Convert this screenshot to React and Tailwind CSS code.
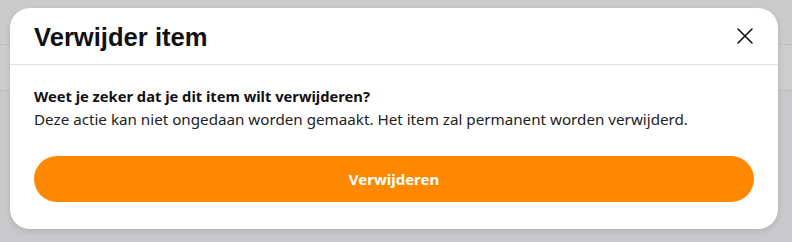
import React from "react";

export default function App() {
  return (
    <div className="relative w-[792px] h-[242px] bg-[#c9c9cb] overflow-hidden">
      <div className="absolute inset-x-0 top-0 h-[45px] bg-[#cbcbcb] border-b border-[#bfbfbf]"></div>
      <div className="absolute inset-x-0 top-[45px] h-[46px] bg-[#cdcdcd] border-b border-[#bdbdbd]"></div>
      <div className="absolute left-[10px] top-[8px] w-[768px] h-[221px] bg-white rounded-[20px] shadow-[0_2px_6px_rgba(0,0,0,0.12)] flex flex-col">
        <div className="h-[57px] flex items-center justify-between px-6 border-b border-[#e2e2e2] shrink-0">
          <h2 className="text-[25.6px] font-bold text-[#111] pt-[2px]" style={{ fontFamily: '"Liberation Sans", Arial, sans-serif' }}>
            Verwijder item
          </h2>
          <svg width="18" height="18" viewBox="0 0 18 18">
            <path d="M2 2 L16 16 M16 2 L2 16" stroke="#111" strokeWidth="1.6" strokeLinecap="round" />
          </svg>
        </div>
        <div className="px-6 pt-[20px]" style={{ fontFamily: '"Noto Sans", sans-serif' }}>
          <p className="text-[14.7px] font-bold text-[#111] leading-[22px]">Weet je zeker dat je dit item wilt verwijderen?</p>
          <p className="text-[15.2px] text-[#222] leading-[22px] mt-[1px]">
            Deze actie kan niet ongedaan worden gemaakt. Het item zal permanent worden verwijderd.
          </p>
          <button className="mt-[26px] w-full h-[46px] rounded-full bg-[#ff8800] text-white text-[15px] font-bold">
            Verwijderen
          </button>
        </div>
      </div>
    </div>
  );
}
